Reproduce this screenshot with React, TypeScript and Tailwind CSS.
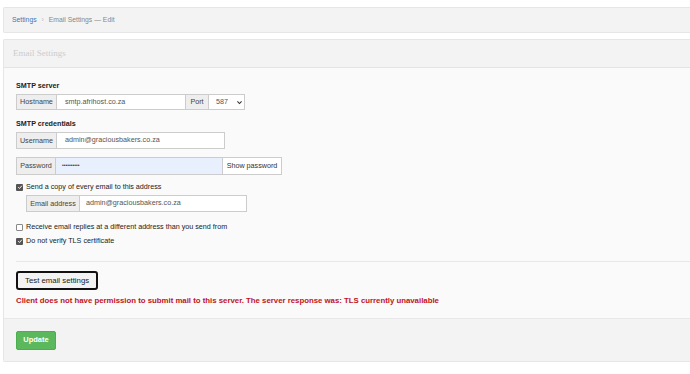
const font = { fontFamily: '"Liberation Sans", Arial, sans-serif' };

function Addon({ label, className = "" }: { label: string; className?: string }) {
  return (
    <div
      className={`flex items-center justify-center bg-[#eeeeee] border border-[#cccccc] text-[7.2px] leading-none text-[#444] ${className}`}
    >
      {label}
    </div>
  );
}

function Check({ checked, label }: { checked: boolean; label: string }) {
  return (
    <div className="flex items-center gap-[3px] h-[10px]">
      <div
        className={`w-[7px] h-[7px] rounded-[1px] flex items-center justify-center ${
          checked ? "bg-[#555]" : "border border-[#888] bg-white"
        }`}
      >
        {checked && (
          <svg viewBox="0 0 10 10" className="w-[6px] h-[6px]">
            <path d="M2 5.2 L4.2 7.4 L8.2 2.8" stroke="white" strokeWidth="1.6" fill="none" />
          </svg>
        )}
      </div>
      <span className="text-[7.2px] leading-[10px] text-[#222]">{label}</span>
    </div>
  );
}

export default function App() {
  return (
    <div className="w-[690px] h-[374px] bg-white pt-[7px] pl-[3px] overflow-hidden" style={font}>
      <div className="h-[26px] bg-[#f3f3f3] border border-r-0 border-[#e6e6e6] rounded-l-[2px] flex items-center pl-[8px] text-[6.8px] gap-[5px]">
        <span className="text-[#3a79b8]">Settings</span>
        <span className="text-[#bbb]">›</span>
        <span className="text-[#888]">Email Settings — Edit</span>
      </div>

      <div className="mt-[6px] border border-r-0 border-[#e6e6e6] rounded-l-[2px]">
        <div className="h-[28px] bg-[#f3f3f3] border-b border-[#e3e3e3] flex items-center pl-[9px]">
          <span className="text-[9px] text-[#cccccc]" style={{ fontFamily: '"Liberation Serif", serif' }}>
            Email Settings
          </span>
        </div>

        <div className="bg-[#fafafa] pl-[12px] pt-[13px] pb-[12px]">
          <div className="text-[7.2px] leading-[10px] font-bold text-[#222] mb-[3px]">SMTP server</div>
          <div className="flex h-[16px]">
            <Addon label="Hostname" className="w-[41px]" />
            <div className="w-[129px] border border-l-0 border-[#cccccc] bg-white flex items-center pl-[8px] text-[7.2px] text-[#555]">
              smtp.afrihost.co.za
            </div>
            <Addon label="Port" className="w-[23px] border-l-0" />
            <div className="w-[36px] border border-l-0 border-[#cccccc] bg-white flex items-center pl-[7px] gap-[8px] text-[7.2px] text-[#555]">
              587
              <svg viewBox="0 0 10 10" className="w-[7px] h-[7px]">
                <path d="M2 3.5 L5 6.5 L8 3.5" stroke="#333" strokeWidth="1.6" fill="none" />
              </svg>
            </div>
          </div>

          <div className="text-[7.2px] leading-[10px] font-bold text-[#222] mt-[9px] mb-[3px]">SMTP credentials</div>
          <div className="flex h-[17px]">
            <Addon label="Username" className="w-[41px]" />
            <div className="w-[168px] border border-l-0 border-[#cccccc] bg-white flex items-center pl-[8px] text-[7.2px] text-[#555]">
              admin@graciousbakers.co.za
            </div>
          </div>

          <div className="flex h-[18px] mt-[8px]">
            <Addon label="Password" className="w-[40px]" />
            <div className="w-[167px] border border-l-0 border-[#cccccc] bg-[#e8f0fe] flex items-center pl-[6px] text-[5px] text-[#333]">
              ••••••••••
            </div>
            <div className="w-[59px] border border-l-0 border-[#cccccc] bg-white flex items-center justify-center text-[7.2px] text-[#333]">
              Show password
            </div>
          </div>

          <div className="mt-[7px]">
            <Check checked label="Send a copy of every email to this address" />
          </div>
          <div className="flex h-[17px] ml-[10px] mt-[3px]">
            <Addon label="Email address" className="w-[54px]" />
            <div className="w-[167px] border border-l-0 border-[#cccccc] bg-white flex items-center pl-[6px] text-[7.2px] text-[#555]">
              admin@graciousbakers.co.za
            </div>
          </div>

          <div className="mt-[10px] flex flex-col gap-[4px]">
            <Check checked={false} label="Receive email replies at a different address than you send from" />
            <Check checked label="Do not verify TLS certificate" />
          </div>

          <div className="h-px bg-[#e8e8e8] mt-[15px]" />

          <div className="mt-[9px] inline-flex h-[19px] items-center px-[7px] border-2 border-[#111] rounded-[3px] bg-[#f3f3f3] text-[7.8px] text-[#222]">
            Test email settings
          </div>
          <div className="mt-[6px] text-[7.8px] leading-[10px] font-bold text-[#c0121b]">
            Client does not have permission to submit mail to this server. The server response was: TLS currently unavailable
          </div>
        </div>

        <div className="bg-[#f3f3f3] border-t border-[#e8e8e8] h-[43px] pl-[12px] flex items-center">
          <div className="h-[19px] w-[40px] bg-[#5cb85c] border border-[#4cae4c] rounded-[2px] flex items-center justify-center text-[7.5px] font-bold text-white">
            Update
          </div>
        </div>
      </div>
    </div>
  );
}
